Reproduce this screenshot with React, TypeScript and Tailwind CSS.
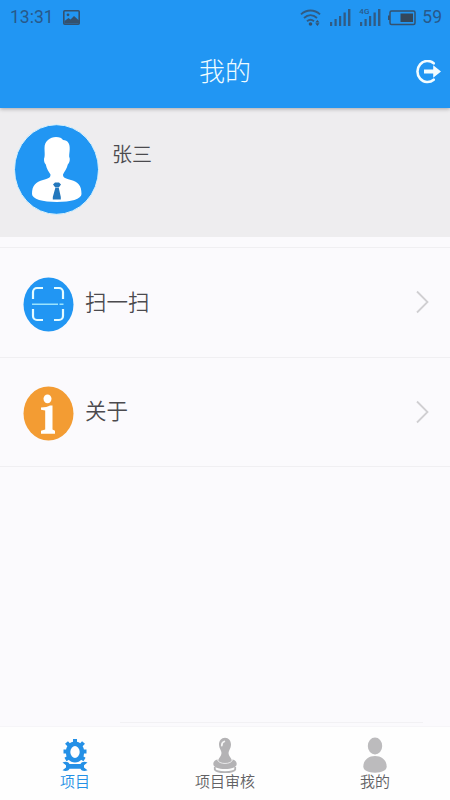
import type { ReactNode } from 'react';

// ==========================================
// "我的" (profile screen)
// ==========================================

interface MenuItem {
  label: string;
  icon: ReactNode;
}

interface TabItem {
  label: string;
  icon: ReactNode;
  active?: boolean;
}

const MENU: MenuItem[] = [
  { label: '扫一扫', icon: <ScanIcon /> },
  { label: '关于', icon: <InfoIcon /> },
];

const TABS: TabItem[] = [
  { label: '项目', icon: <GearWrenchIcon />, active: true },
  { label: '项目审核', icon: <StampIcon /> },
  { label: '我的', icon: <PersonIcon /> },
];

export default function App() {
  return (
    <div className="flex h-[800px] w-[450px] flex-col overflow-hidden bg-[#fbfafd] font-['Noto_Sans_CJK_SC',sans-serif] font-[350] text-[#4b4a4e]">
      <header className="relative h-[108px] shrink-0 bg-[#2196f3] shadow-[0_1px_4px_rgba(0,0,0,0.3)]">
        <StatusBar />
        <div className="grid h-[73px] grid-cols-[1fr_auto_1fr] items-center">
          <h1 className="col-start-2 pb-[4px] text-[26px] leading-[69px] font-light text-[#effcff]">我的</h1>
          <button type="button" className="mr-[9px] justify-self-end" aria-label="退出">
            <LogoutIcon />
          </button>
        </div>
      </header>

      <section className="flex h-[129px] shrink-0 bg-[#eeedef] pt-[16px] pl-[14px]">
        <AvatarIcon />
        <span className="mt-[15px] ml-[13px] text-[20px] leading-[30px]">张三</span>
      </section>

      <ul className="mt-[10px] flex-1 border-t border-[#f0eff2]">
        {MENU.map((item) => (
          <MenuRow key={item.label} item={item} />
        ))}
      </ul>

      <div className="mr-[27px] ml-[120px] h-[4px] border-t border-[#f2f1f4]" />
      <nav className="grid h-[74px] shrink-0 grid-cols-3 border-t border-[#f6f5f8] bg-[#fefefe]">
        {TABS.map((tab) => (
          <div
            key={tab.label}
            className={`flex flex-col items-center pt-[10px] ${tab.active ? 'text-[#2490e6]' : 'text-[#626164]'}`}
          >
            {tab.icon}
            <span className="text-[15px] leading-[18px]">{tab.label}</span>
          </div>
        ))}
      </nav>
    </div>
  );
}

function MenuRow({ item }: { item: MenuItem }) {
  return (
    <li className="flex h-[109.5px] items-center border-b border-[#f0eff2] pr-[21px] pl-[23px]">
      <span className="mt-[4px]">{item.icon}</span>
      <span className="ml-[11px] flex-1 pb-[3px] text-[21.5px] leading-[32px]">{item.label}</span>
      <svg width="14" height="24" viewBox="0 0 14 24" fill="none" stroke="#d0cfd2" strokeWidth="1.8">
        <path d="M2 1.5 12.5 12 2 22.5" />
      </svg>
    </li>
  );
}

function StatusBar() {
  return (
    <div className="flex h-[35px] items-center pr-[8px] pl-[10px] font-[Roboto,sans-serif] text-[17.5px] font-normal text-[#28598a]">
      <span className="w-[44px]">13:31</span>
      <svg className="ml-[9px]" width="17" height="15" viewBox="0 0 17 15">
        <rect x=".8" y=".8" width="15.4" height="13.4" rx="1" fill="none" stroke="#34516e" strokeWidth="1.6" />
        <circle cx="5" cy="4.8" r="1.4" fill="#34516e" />
        <path d="M1.5 13.5V11l4-3 2 1.5L11 6l5 4.5v3Z" fill="#34516e" />
      </svg>
      <div className="ml-auto flex items-center">
        <svg width="21" height="18" viewBox="0 0 21 18" fill="none" stroke="#315b83" strokeWidth="1.9">
          <path d="M1 5.4C6.5.2 14.5.2 20 5.4M4 9c4-3.6 9-3.6 13 0M7 12.3c2.2-2 4.800-2 7 0" />
          <circle cx="10.5" cy="15" r="1.8" fill="#34516e" stroke="none" />
          <path d="M15.3 14.3h4.200L17.4 17ZM15.3 13.5h4.200L17.4 11Z" fill="#34516e" stroke="none" />
        </svg>
        <span className="ml-[9px]">
          <SignalBars />
        </span>
        <span className="relative ml-[9px]">
          <span className="absolute top-[-2px] left-[-1px] text-[8px] leading-[10px] font-medium">4G</span>
          <SignalBars />
        </span>
        <svg className="ml-[7px]" width="28" height="16" viewBox="0 0 28 16">
          <rect x="2" y="1" width="25" height="13.5" rx="1.5" fill="none" stroke="#34516e" strokeWidth="1.5" />
          <rect x="0" y="5.5" width="2" height="4.5" fill="#34516e" />
          <rect x="12.5" y="3.5" width="12.5" height="8.5" fill="#34485c" />
        </svg>
        <span className="ml-[6px]">59</span>
      </div>
    </div>
  );
}

function SignalBars() {
  return (
    <svg width="21" height="17" viewBox="0 0 21 17" fill="#315b83">
      <rect x="0" y="13" width="2.2" height="4" />
      <rect x="4.5" y="10" width="2.2" height="7" />
      <rect x="9" y="7" width="2.2" height="10" />
      <rect x="13.5" y="3.5" width="2.3" height="13.5" />
      <rect x="18" y="0" width="2.4" height="17" />
    </svg>
  );
}

function LogoutIcon() {
  return (
    <svg width="25" height="24" viewBox="0 0 25 24">
      <path
        d="M17.7 3.3A10 10.5 0 1 0 17.7 19.7"
        fill="none"
        stroke="#f2fcff"
        strokeWidth="2.6"
        strokeLinecap="round"
      />
      <path d="M8 9.5h9.2V5.3L25 11.5l-7.8 6.2V13.5H8Z" fill="#f2fcff" />
    </svg>
  );
}

function AvatarIcon() {
  return (
    <svg width="85" height="91" viewBox="0 0 85 91">
      <ellipse cx="42.5" cy="45.5" rx="42" ry="44.8" fill="#2196f3" stroke="#d9f2fc" strokeWidth="1" />
      <path
        d="M30.5 24C30.5 17 36 13 42 13C45.500 13 48 14 49 16C54 16 56 20 55.700 25C55.700 28 55 30 55.200 33C56.500 35 55.500 39 53.800 40.500C53 45 50 48 49 50.500C49 54 52 54.500 57 56C64 58 67.500 61 67.500 70C67.500 75 57 78 42.800 78S18 75 18 70C18 61 22 58 29 56C34 54.500 36.500 54 36.500 50.500C35 48 32.500 45 31.800 40.500C30 39 29.500 35 30.500 33C31 30 30.500 28 30.500 24Z"
        fill="#fff"
      />
      <path d="M39 60.500 41 58.500h4L47 60.500 44.800 63.500h-3.500ZM41.300 64h3.500L46.800 73v2.500h-8V73Z" fill="#2478bd" />
    </svg>
  );
}

function ScanIcon() {
  return (
    <svg width="51" height="55" viewBox="0 0 51 55">
      <ellipse cx="25.5" cy="27.5" rx="25" ry="27" fill="#2196f3" />
      <g fill="none" stroke="#e4fbff" strokeWidth="2.2">
        <path d="M10 22v-7a4 4 0 0 1 4-4h6M31 11h5a4 4 0 0 1 4 4v7M40 32v7a4 4 0 0 1-4 4h-5M20 43h-6a4 4 0 0 1-4-4v-7" />
        <path d="M9 27.2h26M36.5 27.2h4" strokeWidth="1.5" stroke="#9be3fd" />
      </g>
    </svg>
  );
}

function InfoIcon() {
  return (
    <svg width="51" height="55" viewBox="0 0 51 55">
      <ellipse cx="25.5" cy="27.5" rx="25" ry="27" fill="#f39c33" />
      <ellipse cx="24.5" cy="12.8" rx="4" ry="4.4" fill="#fff" />
      <path d="M18 21.5c4 0 7-1 9-2h2.500V43.500l2.500 1.200v3H18v-3l4.200-1.200V24.500l-4.200-.7Z" fill="#fff" />
    </svg>
  );
}

function GearWrenchIcon() {
  return (
    <svg width="28" height="37" viewBox="0 0 28 37" fill="#2490e6" className="mb-[-2px]">
      {/* ring, then the teeth as short spokes over it */}
      <ellipse cx="14" cy="15" rx="7" ry="8.2" fill="none" stroke="#2490e6" strokeWidth="4.6" />
      <path
        d="M14 2v4M5.500 5.500l2.800 3M22.500 5.500l-2.800 3M2.500 14.500h4M25.500 14.500h-4M4.500 22.500l4-2.500M23.500 22.500l-4-2.500"
        fill="none"
        stroke="#2490e6"
        strokeWidth="4"
      />
      <path d="M1.500 25.500C4.500 24 7.500 24.700 8.500 27h11C20.500 24.700 23.500 24 26.500 25.500L23 28.200v2.200L26.500 33.200C23.500 34.700 20.500 34 19.500 31.800h-11C7.500 34 4.500 34.700 1.500 33.200L5 30.400v-2.200Z" />
    </svg>
  );
}

function StampIcon() {
  return (
    <svg width="26" height="37" viewBox="0 0 26 37" className="mb-[-2px]">
      <path
        d="M13 .8C9.300.8 7 4 7 7.800C7 11.500 9.500 13.500 9.500 16C9.500 19 7 20.500 6 23.500C7 28.500 19 28.500 20 23.500C19 20.500 16.500 19 16.500 16C16.500 13.500 19 11.500 19 7.800C19 4 16.700.8 13 .8Z"
        fill="#b4b3b5"
      />
      <path d="M5.500 22.500C3 23 1.300 24.500 1.300 27C1.300 30.500 6.500 32 13 32S24.700 30.500 24.700 27C24.700 24.500 23 23 20.500 22.500C20 27.500 6 27.500 5.500 22.500Z" fill="#b4b3b5" />
      <path d="M5.500 22.500C6 27.800 20 27.800 20.500 22.500" fill="none" stroke="#e8e8e9" strokeWidth="1" />
      <path d="M2.800 30v2.500C4.500 36 21.500 36 23.200 32.500V30" fill="none" stroke="#b4b3b5" strokeWidth="1.8" />
      <path d="M9.800 8.500c0-2 .9-3.500 2.500-4" fill="none" stroke="#f4f4f4" strokeWidth="1.8" strokeLinecap="round" />
    </svg>
  );
}

function PersonIcon() {
  return (
    <svg width="26" height="37" viewBox="0 0 26 37" fill="#bcbbbd" className="mb-[-2px]">
      <ellipse cx="13" cy="9" rx="7.2" ry="8.5" />
      <path d="M1.3 29.500C1.300 23.500 6 19 13 19S24.700 23.500 24.700 29.500C24.700 33.500 19.500 35.700 13 35.700S1.300 33.500 1.300 29.500Z" />
    </svg>
  );
}
